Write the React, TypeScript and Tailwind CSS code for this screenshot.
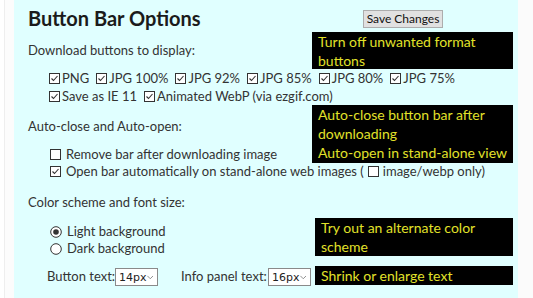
import React from 'react';

const font = { fontFamily: 'Lato, "Noto Sans", sans-serif' };

const Check = ({ checked = true }: { checked?: boolean }) => (
  <svg width="11" height="11" viewBox="0 0 11 11" className="shrink-0">
    <rect x="0.5" y="0.5" width="10" height="10" fill="white" stroke="#333" strokeWidth="1" />
    {checked && <path d="M2.5 5.5 L4.5 7.5 L8.5 3" fill="none" stroke="#333" strokeWidth="1.1" />}
  </svg>
);

const Radio = ({ checked }: { checked?: boolean }) => (
  <svg width="12" height="12" viewBox="0 0 12 12" className="shrink-0">
    <circle cx="6" cy="6" r="5.3" fill="white" stroke="#333" strokeWidth="1" />
    {checked && <circle cx="6" cy="6" r="2.8" fill="#333" />}
  </svg>
);

const Select = ({ value }: { value: string }) => (
  <div className="flex h-[18px] w-[43px] shrink-0 items-center justify-between border border-[#8a8a8a] bg-white pl-[3px] pr-[4px]">
    <span className="text-[11px] leading-none text-[#222]" style={{ fontFamily: '"DejaVu Sans", sans-serif' }}>
      {value}
    </span>
    <svg width="8" height="5" viewBox="0 0 8 5">
      <path d="M0.5 0.5 L4 4 L7.5 0.5" fill="none" stroke="#777" strokeWidth="1" />
    </svg>
  </div>
);

const Tip = ({ className, children }: { className: string; children: React.ReactNode }) => (
  <div className={`absolute whitespace-nowrap bg-black px-[6px] text-[14px] leading-[19px] text-[#e2e22a] ${className}`}>{children}</div>
);

const formats = ['PNG', 'JPG 100%', 'JPG 92%', 'JPG 85%', 'JPG 80%', 'JPG 75%'];

export default function App() {
  return (
    <div className="flex h-[298px] w-[533px] overflow-hidden whitespace-nowrap bg-white text-[13px] text-[#333]" style={font}>
      <div className="ml-[4px] w-[10px] border-l border-[#eee] bg-[#fcfcfc]" />
      <div className="relative flex-1 bg-[#e0ffff] pl-[14px]">
        <div className="flex h-[32px] items-center pt-[4px]">
          <h1 className="w-[335px] text-[20px] font-bold leading-[28px] text-[#1b1b1b]">Button Bar Options</h1>
          <button className="mt-[1px] h-[18px] w-[80px] border border-[#adadad] bg-[#e1e1e1] text-[12px] leading-none text-[#111]">
            Save Changes
          </button>
        </div>

        <p className="mt-[9px] h-[18px] leading-[18px]">Download buttons to display:</p>
        <div className="mt-[10px] pl-[21px] leading-[18px]">
          <div className="flex h-[18px] items-center gap-[7px]">
            {formats.map((f) => (
              <span key={f} className="flex items-center gap-[2px]">
                <Check />
                {f}
              </span>
            ))}
          </div>
          <div className="flex h-[18px] items-center gap-[7px]">
            <span className="flex items-center gap-[2px]">
              <Check />
              Save as IE 11
            </span>
            <span className="flex items-center gap-[2px]">
              <Check />
              Animated WebP (via ezgif.com)
            </span>
          </div>
        </div>

        <p className="mt-[12px] h-[18px] leading-[18px]">Auto-close and Auto-open:</p>
        <div className="mt-[11px] pl-[22px] leading-[17px]">
          <div className="flex h-[17px] items-center gap-[5px]">
            <Check checked={false} />
            Remove bar after downloading image
          </div>
          <div className="flex h-[17px] items-center gap-[5px]">
            <Check />
            <span className="flex items-center gap-[4px]">
              Open bar automatically on stand-alone web images (<Check checked={false} /> image/webp only)
            </span>
          </div>
        </div>

        <p className="mt-[13px] h-[18px] leading-[18px]">Color scheme and font size:</p>
        <div className="mt-[12px] pl-[22px] leading-[17px]">
          <div className="flex h-[17px] items-center gap-[5px]">
            <Radio checked />
            Light background
          </div>
          <div className="flex h-[17px] items-center gap-[5px]">
            <Radio />
            Dark background
          </div>
        </div>

        <div className="mt-[11px] flex h-[18px] items-center pl-[19px]">
          <span className="w-[68px]">Button text:</span>
          <Select value="14px" />
          <span className="ml-[23px] w-[87px]">Info panel text:</span>
          <Select value="16px" />
        </div>

        <Tip className="left-[298px] top-[32px] h-[37px] w-[201px]">
          Turn off unwanted format
          <br />
          buttons
        </Tip>
        <Tip className="left-[298px] top-[105px] h-[58px] w-[201px]">
          Auto-close button bar after
          <br />
          downloading
          <br />
          Auto-open in stand-alone view
        </Tip>
        <Tip className="left-[301px] top-[218px] h-[38px] w-[198px]">
          Try out an alternate color
          <br />
          scheme
        </Tip>
        <Tip className="left-[301px] top-[266px] h-[19px] w-[198px]">Shrink or enlarge text</Tip>
      </div>
      <div className="w-[15px] bg-[#fbfbfb]" />
    </div>
  );
}
